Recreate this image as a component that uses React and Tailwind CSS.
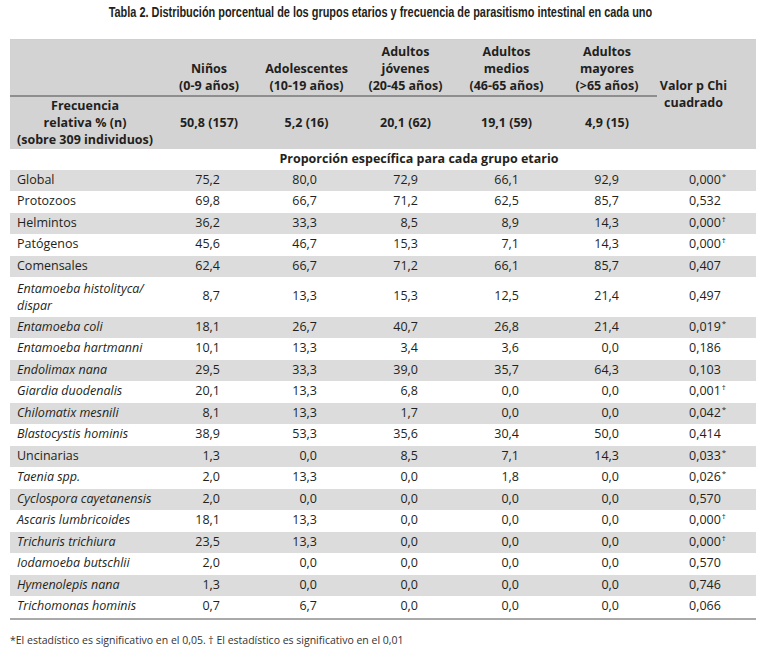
import React from "react";

const rows = [
  ["Global", false, "75,2", "80,0", "72,9", "66,1", "92,9", "0,000", "*"],
  ["Protozoos", false, "69,8", "66,7", "71,2", "62,5", "85,7", "0,532", ""],
  ["Helmintos", false, "36,2", "33,3", "8,5", "8,9", "14,3", "0,000", "†"],
  ["Patógenos", false, "45,6", "46,7", "15,3", "7,1", "14,3", "0,000", "†"],
  ["Comensales", false, "62,4", "66,7", "71,2", "66,1", "85,7", "0,407", ""],
  ["Entamoeba histolityca/ dispar", true, "8,7", "13,3", "15,3", "12,5", "21,4", "0,497", ""],
  ["Entamoeba coli", true, "18,1", "26,7", "40,7", "26,8", "21,4", "0,019", "*"],
  ["Entamoeba hartmanni", true, "10,1", "13,3", "3,4", "3,6", "0,0", "0,186", ""],
  ["Endolimax nana", true, "29,5", "33,3", "39,0", "35,7", "64,3", "0,103", ""],
  ["Giardia duodenalis", true, "20,1", "13,3", "6,8", "0,0", "0,0", "0,001", "†"],
  ["Chilomatix mesnili", true, "8,1", "13,3", "1,7", "0,0", "0,0", "0,042", "*"],
  ["Blastocystis hominis", true, "38,9", "53,3", "35,6", "30,4", "50,0", "0,414", ""],
  ["Uncinarias", false, "1,3", "0,0", "8,5", "7,1", "14,3", "0,033", "*"],
  ["Taenia spp.", true, "2,0", "13,3", "0,0", "1,8", "0,0", "0,026", "*"],
  ["Cyclospora cayetanensis", true, "2,0", "0,0", "0,0", "0,0", "0,0", "0,570", ""],
  ["Ascaris lumbricoides", true, "18,1", "13,3", "0,0", "0,0", "0,0", "0,000", "†"],
  ["Trichuris trichiura", true, "23,5", "13,3", "0,0", "0,0", "0,0", "0,000", "†"],
  ["Iodamoeba butschlii", true, "2,0", "0,0", "0,0", "0,0", "0,0", "0,570", ""],
  ["Hymenolepis nana", true, "1,3", "0,0", "0,0", "0,0", "0,0", "0,746", ""],
  ["Trichomonas hominis", true, "0,7", "6,7", "0,0", "0,0", "0,0", "0,066", ""],
];

const cols = "grid grid-cols-[150px_98px_97px_101px_101px_100px_99px]";

function Header() {
  const groups = [
    ["Niños", "(0-9 años)"],
    ["Adolescentes", "(10-19 años)"],
    ["Adultos", "jóvenes", "(20-45 años)"],
    ["Adultos", "medios", "(46-65 años)"],
    ["Adultos", "mayores", "(>65 años)"],
  ];
  const freq = ["50,8 (157)", "5,2 (16)", "20,1 (62)", "19,1 (59)", "4,9 (15)"];
  return (
    <div className={`${cols} grid-rows-[55px_2px_52px] bg-[#d3d3d3] font-bold leading-[17px]`}>
      <div className="col-start-1 row-start-1" />
      {groups.map((g, i) => (
        <div key={i} className="row-start-1 flex flex-col items-center justify-end pb-[1px] text-center" style={{ gridColumnStart: i + 2 }}>
          {g.map((l, j) => (
            <span key={j}>{l}</span>
          ))}
        </div>
      ))}
      <div className="col-start-7 row-start-1 row-span-3 flex flex-col items-center justify-center pr-[26px] text-center">
        <span>Valor p Chi</span>
        <span>cuadrado</span>
      </div>
      <div className="col-start-1 col-span-6 row-start-2 bg-[#8e8e8e]" />
      <div className="col-start-1 row-start-3 flex flex-col items-center justify-center text-center">
        <span>Frecuencia</span>
        <span>relativa % (n)</span>
        <span>(sobre 309 individuos)</span>
      </div>
      {freq.map((f, i) => (
        <div key={i} className="row-start-3 flex items-center justify-center" style={{ gridColumnStart: i + 2 }}>
          {f}
        </div>
      ))}
    </div>
  );
}

function Row({ r, idx }) {
  const [label, it, ...rest] = r;
  const vals = rest.slice(0, 5);
  const p = rest[5];
  const sup = rest[6];
  const tall = label.includes("/");
  return (
    <div className={`${cols} ${tall ? "h-[39.5px]" : "h-[21.5px]"} ${idx % 2 === 0 ? "bg-[#dcdcdc]" : "bg-white"}`}>
      <div className={`flex items-center pl-[7px] ${it ? "italic" : ""} ${tall ? "leading-[17px]" : ""}`}>
        {tall ? (
          <div className="flex flex-col">
            <span>Entamoeba histolityca/</span>
            <span>dispar</span>
          </div>
        ) : (
          label
        )}
      </div>
      {vals.map((v, i) => (
        <div key={i} className="flex items-center justify-end pr-[38px]">
          {v}
        </div>
      ))}
      <div className="flex items-center pl-[32px]">
        <span>
          {p}
          {sup && <sup className="relative top-[-5px] ml-[1px] text-[8px]">{sup}</sup>}
        </span>
      </div>
    </div>
  );
}

export default function App() {
  return (
    <div className="w-[760px] h-[650px] bg-white text-[#231f20] font-['Open_Sans',sans-serif] text-[12.5px] overflow-hidden">
      <div className="flex justify-center pt-[3.5px]">
        <div className="inline-block scale-x-[0.78] whitespace-nowrap font-bold text-[14px] leading-[17px] font-['Liberation_Sans',sans-serif]">
          Tabla 2. Distribución porcentual de los grupos etarios y frecuencia de parasitismo intestinal en cada uno
        </div>
      </div>
      <div className="ml-[10px] mt-[18px] w-[746px]">
        <div className="h-[1px] bg-[#cfcfcf]" />
        <Header />
        <div className={`${cols} h-[21px]`}>
          <div className="col-start-2 col-span-6 flex items-center justify-center pr-[78px] font-bold">
            Proporción específica para cada grupo etario
          </div>
        </div>
        {rows.map((r, i) => (
          <Row key={i} r={r} idx={i} />
        ))}
        <div className="h-[2px] bg-[#a9a9a9]" />
        <div className="mt-[13px] text-[10.5px] leading-[14px] text-[#333]">
          *El estadístico es significativo en el 0,05. † El estadístico es significativo en el 0,01
        </div>
      </div>
    </div>
  );
}
